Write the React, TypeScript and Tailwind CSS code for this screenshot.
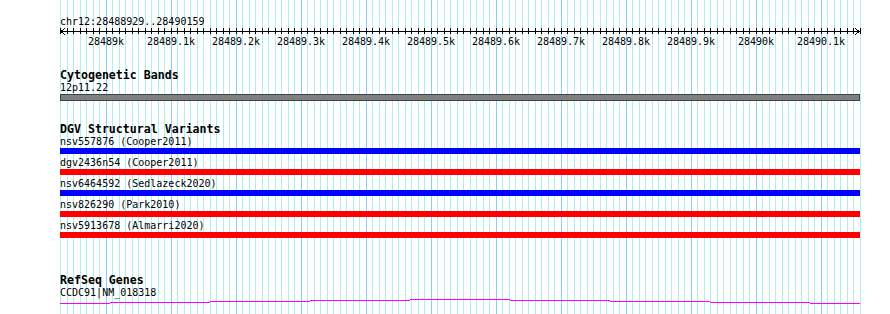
import React from 'react';

const START = 28488930;
const STEPS = 123;

const variants = [
  { name: 'nsv557876 (Cooper2011)', color: 'bg-[#0000ff]' },
  { name: 'dgv2436n54 (Cooper2011)', color: 'bg-[#ff0000]' },
  { name: 'nsv6464592 (Sedlazeck2020)', color: 'bg-[#0000ff]' },
  { name: 'nsv826290 (Park2010)', color: 'bg-[#ff0000]' },
  { name: 'nsv5913678 (Almarri2020)', color: 'bg-[#ff0000]' },
];

const ticks = [
  '28489k',
  '28489.1k',
  '28489.2k',
  '28489.3k',
  '28489.4k',
  '28489.5k',
  '28489.6k',
  '28489.7k',
  '28489.8k',
  '28489.9k',
  '28490k',
  '28490.1k',
];

// gene line steps: [from, to, y] in local coordinates
const geneSegments = [
  [0, 50, 4],
  [50, 150, 3],
  [150, 250, 2],
  [250, 350, 1],
  [350, 450, 0],
  [450, 550, 1],
  [550, 650, 2],
  [650, 750, 3],
  [750, 800, 4],
];

function Grid() {
  const lines = [];
  for (let i = 0; i <= STEPS; i++) {
    const bp = START + i * 10;
    const major = bp % 100 === 0;
    lines.push(
      <rect
        key={i}
        x={Math.round(60 + i * 6.5)}
        y={0}
        width={1}
        height={314}
        fill={major ? '#87cefa' : '#afeeee'}
      />
    );
  }
  return (
    <svg className="absolute inset-0" width={890} height={314} shapeRendering="crispEdges">
      {lines}
    </svg>
  );
}

function Ruler() {
  const marks = [];
  for (let i = 0; i <= STEPS; i++) {
    marks.push(<rect key={i} x={Math.round(i * 6.5)} y={0} width={1} height={6} fill="#000" />);
  }
  return (
    <svg width={801} height={7} shapeRendering="crispEdges" className="block">
      <rect x={0} y={3} width={801} height={1} fill="#000" />
      {marks}
      <path d="M5 0.5 L0.5 3.5 L5 6.5" fill="none" stroke="#000" strokeWidth={1} />
      <path d="M795 0.5 L799.5 3.5 L795 6.5" fill="none" stroke="#000" strokeWidth={1} />
    </svg>
  );
}

function TickLabels() {
  return (
    <div className="relative h-[13px] text-[10px] leading-[13px]">
      {ticks.map((t, k) => (
        <span
          key={t}
          className="absolute top-0 -translate-x-1/2 whitespace-pre"
          style={{ left: Math.round((7 + k * 10) * 6.5) }}
        >
          {t}
        </span>
      ))}
    </div>
  );
}

function Title({ children, className = '' }: { children: React.ReactNode; className?: string }) {
  return <div className={`h-[12px] text-[11.6px] leading-[12px] font-bold whitespace-pre ${className}`}>{children}</div>;
}

function Label({ children }: { children: React.ReactNode }) {
  return <div className="h-[13px] text-[10px] leading-[13px] whitespace-pre">{children}</div>;
}

export default function App() {
  return (
    <div className="relative w-[890px] h-[314px] overflow-hidden bg-white text-black font-['DejaVu_Sans_Mono',monospace]">
      <Grid />
      <div className="relative flex flex-col pl-[60px] pt-[15px] w-[861px]">
        <Label>chr12:28488929..28490159</Label>
        <Ruler />
        <TickLabels />

        {/* Cytogenetic Bands */}
        <Title className="mt-[21px]">Cytogenetic Bands</Title>
        <Label>12p11.22</Label>
        <div className="h-[7px] w-[800px] bg-[#808080] border border-[#404040]" />

        {/* DGV */}
        <Title className="mt-[22px]">DGV Structural Variants</Title>
        <div className="flex flex-col gap-[2px]">
          {variants.map((v) => (
            <div key={v.name} className="flex flex-col">
              <Label>{v.name}</Label>
              <div className={`h-[6px] w-[800px] ${v.color}`} />
            </div>
          ))}
        </div>

        {/* RefSeq */}
        <Title className="mt-[36px]">RefSeq Genes</Title>
        <Label>CCDC91|NM_018318</Label>
        <svg width={800} height={6} shapeRendering="crispEdges" className="block">
          {geneSegments.map(([a, b, y]) => (
            <rect key={a} x={a} y={y} width={b - a} height={1} fill="#ff00ff" />
          ))}
        </svg>
      </div>
    </div>
  );
}
